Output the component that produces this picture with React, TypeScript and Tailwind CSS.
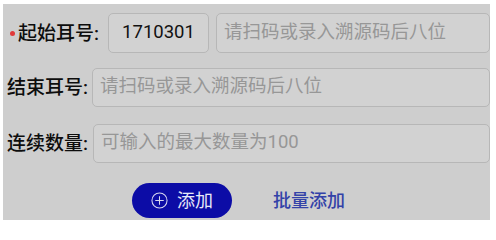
import React from 'react';

const font = { fontFamily: 'Roboto, "Noto Sans CJK SC", sans-serif' };

function Field({ placeholder, className }: { placeholder: string; className: string }) {
  return (
    <div
      className={`h-[39px] flex items-center rounded-[5px] border border-[#b7b7b7] bg-[#d2d2d2] pl-[7px] text-[18.5px] text-[#979797] ${className}`}
    >
      {placeholder}
    </div>
  );
}

export default function App() {
  return (
    <div className="w-[496px] h-[225px] bg-white overflow-hidden" style={font}>
      <div className="ml-[3px] mt-[4px] w-[487px] h-[216px] bg-[#cecece] flex flex-col">
        {/* start ear tag */}
        <div className="flex items-center mt-[9px] h-[40px]">
          <span className="ml-[7px] w-[5px] h-[5px] rounded-full bg-[#e03a3a]" />
          <span className="ml-[3px] w-[85px] text-[19px] font-medium text-[#0d0d0d] whitespace-nowrap leading-none">起始耳号:</span>
          <div className="ml-[5px] w-[101px] h-[40px] flex items-center justify-center rounded-[5px] border border-[#b7b7b7] bg-[#d2d2d2] text-[18.5px] text-[#111]">
            1710301
          </div>
          <Field placeholder="请扫码或录入溯源码后八位" className="ml-[7px] flex-1 h-[40px]" />
        </div>

        {/* end ear tag */}
        <div className="flex items-center mt-[15px] h-[38px]">
          <span className="ml-[4px] w-[85px] text-[19px] font-medium text-[#0d0d0d] whitespace-nowrap leading-none">结束耳号:</span>
          <Field placeholder="请扫码或录入溯源码后八位" className="flex-1 h-[38px]" />
        </div>

        {/* count */}
        <div className="flex items-center mt-[18px] h-[38px]">
          <span className="ml-[4px] w-[86px] text-[19px] font-medium text-[#0d0d0d] whitespace-nowrap leading-none">连续数量:</span>
          <Field placeholder="可输入的最大数量为100" className="flex-1 h-[38px]" />
        </div>

        {/* actions */}
        <div className="flex items-center mt-[21px]">
          <button className="ml-[129px] w-[100px] h-[35px] rounded-full bg-[#0c0ca6] flex items-center justify-center gap-[9px] text-[#e8e8f8] text-[18px]">
            <svg width="17" height="17" viewBox="0 0 18 18" fill="none" stroke="#d8d8f0" strokeWidth="1.1">
              <circle cx="9" cy="9" r="8" />
              <path d="M9 4.5v9M4.5 9h9" />
            </svg>
            <span className="leading-none">添加</span>
          </button>
          <span className="ml-[41px] text-[18px] font-medium text-[#3342a8] leading-none">批量添加</span>
        </div>
      </div>
    </div>
  );
}
